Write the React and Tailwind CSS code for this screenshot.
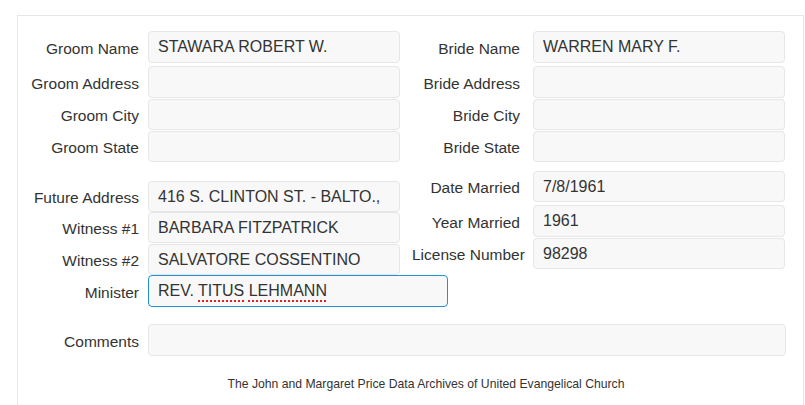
import React from "react";

const font = { fontFamily: '"Liberation Sans", Arial, Helvetica, sans-serif' };

function Field({ value, className = "", focused = false, children }) {
  return (
    <div
      className={
        "flex items-center rounded-[4px] border bg-[#f8f8f8] pl-[9px] text-[16px] leading-none text-[#333] whitespace-nowrap overflow-hidden " +
        (focused ? "border-[#1f93d6] " : "border-[#e6e6e6] ") +
        className
      }
    >
      {children ?? value}
    </div>
  );
}

function LeftRow({ label, value, h, mt, wide, focused, children }) {
  return (
    <div className={"flex items-center " + mt}>
      <div className="w-[121px] shrink-0 text-right text-[15.5px] leading-none text-[#333] pt-[3px] whitespace-nowrap">
        {label}
      </div>
      <Field
        value={value}
        focused={focused}
        className={"ml-[9px] shrink-0 " + h + " " + (wide ? "w-[300px]" : "w-[252px]")}
      >
        {children}
      </Field>
    </div>
  );
}

function RightRow({ label, value, h, mt }) {
  return (
    <div className={"flex items-center " + mt}>
      <div className="ml-[12px] w-[108px] shrink-0 text-right text-[15.5px] leading-none text-[#333] pt-[3px] whitespace-nowrap">
        {label}
      </div>
      <Field value={value} className={"ml-[13px] w-[252px] shrink-0 " + h} />
    </div>
  );
}

export default function App() {
  const spell = "underline decoration-dotted decoration-[#e0201b] decoration-[1.5px] underline-offset-[4px]";
  return (
    <div className="w-[805px] h-[405px] overflow-hidden bg-white" style={font}>
      <div className="ml-[17px] mt-[15px] w-[787px] h-[400px] border border-b-0 border-[#e6e6e6]">
        {/* Section 1 */}
        <div className="grid grid-cols-[382px_404px] pt-[15px]">
          <div className="flex flex-col">
            <LeftRow label="Groom Name" value="STAWARA ROBERT W." h="h-[32px]" mt="" />
            <LeftRow label="Groom Address" value="" h="h-[32px]" mt="mt-[3px]" />
            <LeftRow label="Groom City" value="" h="h-[31px]" mt="mt-[1px]" />
            <LeftRow label="Groom State" value="" h="h-[31px]" mt="mt-[1px]" />
          </div>
          <div className="flex flex-col">
            <RightRow label="Bride Name" value="WARREN MARY F." h="h-[32px]" mt="" />
            <RightRow label="Bride Address" value="" h="h-[32px]" mt="mt-[3px]" />
            <RightRow label="Bride City" value="" h="h-[31px]" mt="mt-[1px]" />
            <RightRow label="Bride State" value="" h="h-[31px]" mt="mt-[1px]" />
          </div>
        </div>

        {/* Section 2 */}
        <div className="grid grid-cols-[382px_404px] items-start">
          <div className="flex flex-col pt-[19px]">
            <LeftRow label="Future Address" value="416 S. CLINTON ST. - BALTO.," h="h-[31px]" mt="" />
            <LeftRow label="Witness #1" value="BARBARA FITZPATRICK" h="h-[31px]" mt="" />
            <LeftRow label="Witness #2" value="SALVATORE COSSENTINO" h="h-[31px]" mt="mt-[1px]" />
            <LeftRow label="Minister" h="h-[32px]" mt="" wide focused>
              <span>
                REV. <span className={spell}>TITUS</span> <span className={spell}>LEHMANN</span>
              </span>
            </LeftRow>
          </div>
          <div className="flex flex-col pt-[9px]">
            <RightRow label="Date Married" value="7/8/1961" h="h-[31px]" mt="" />
            <RightRow label="Year Married" value="1961" h="h-[32px]" mt="mt-[3px]" />
            <RightRow label="License Number" value="98298" h="h-[31px]" mt="mt-[1px]" />
          </div>
        </div>

        {/* Comments */}
        <div className="flex items-center mt-[17px]">
          <div className="w-[121px] shrink-0 text-right text-[15.5px] leading-none text-[#333] pt-[3px]">
            Comments
          </div>
          <Field value="" className="ml-[9px] h-[32px] w-[638px] shrink-0" />
        </div>

        {/* Footer */}
        <div className="mt-[20px] pl-[31px] text-center text-[12.2px] leading-[16px] text-[#333]">
          The John and Margaret Price Data Archives of United Evangelical Church
        </div>
      </div>
    </div>
  );
}
